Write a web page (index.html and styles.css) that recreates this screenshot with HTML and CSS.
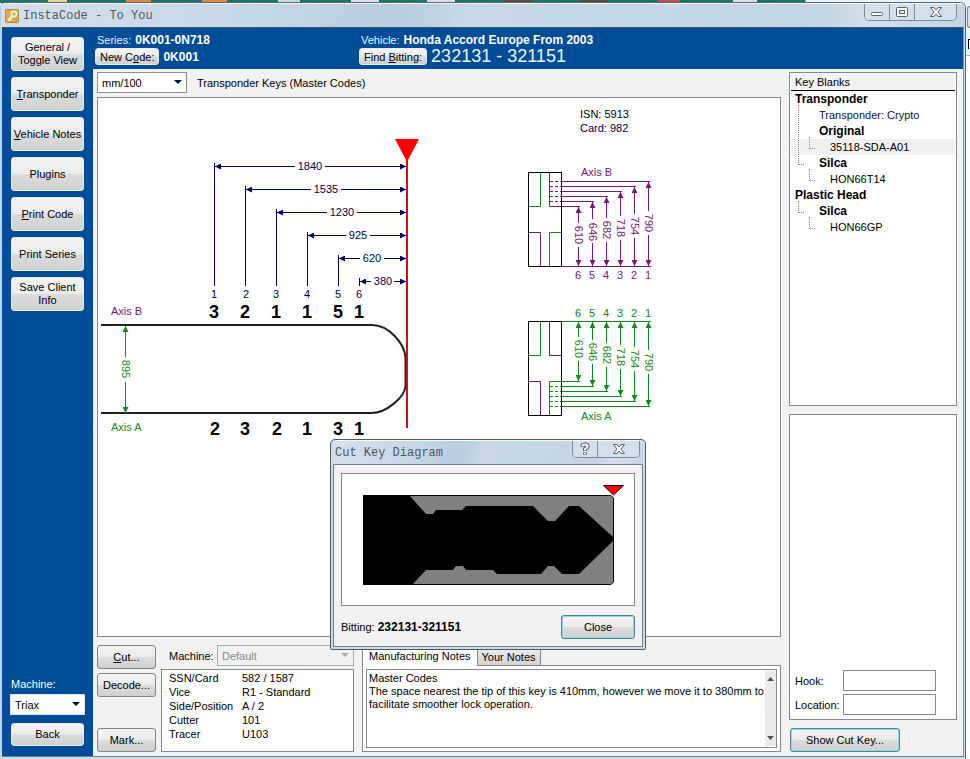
FILE: index.html
```html
<!DOCTYPE html>
<html lang="en">
<head>
<meta charset="utf-8">
<title>InstaCode - To You</title>
<link rel="stylesheet" href="styles.css">
</head>
<body>
<div class="desktop">
  <div class="window">
    <div class="titlebar">
      <svg class="app-icon" width="14" height="14" viewBox="0 0 14 14" aria-hidden="true">
        <rect x="0.5" y="0.5" width="13" height="13" rx="1" fill="#dfa840" stroke="#b98b3c"/>
        <path d="M3 11.500L8 6.500M4.500 10l1.500 1.500" stroke="#fff8e0" stroke-width="2" fill="none"/>
        <circle cx="9" cy="5" r="2.600" fill="#dfa840" stroke="#fff8e0" stroke-width="1.600"/>
      </svg>
      <span class="title">InstaCode - To You</span>
      <div class="caption-buttons">
        <button aria-label="Minimize"><svg width="14" height="12" viewBox="0 0 14 12"><rect x="1.500" y="6.500" width="11" height="3" rx="1" fill="#fff" stroke="#596270"/></svg></button>
        <button aria-label="Restore"><svg width="14" height="12" viewBox="0 0 14 12"><rect x="1.500" y="1.500" width="11" height="9" rx="1" fill="#fff" stroke="#596270"/><rect x="4.500" y="4.500" width="5" height="3" fill="#dde6ef" stroke="#596270"/></svg></button>
        <button class="wide" aria-label="Close window"><svg width="14" height="12" viewBox="0 0 14 12"><path d="M1.500 1.500h3.500l2 2.500 2-2.500h3.500L9 6l3.500 4.500H9L7 8l-2 2.500H1.500L5 6z" fill="#fff" stroke="#596270"/></svg></button>
      </div>
    </div>

    <div class="client">
      <nav class="sidebar">
        <button class="nav-button">General /<br>Toggle View</button>
        <button class="nav-button"><span><u>T</u>ransponder</span></button>
        <button class="nav-button"><span><u>V</u>ehicle Notes</span></button>
        <button class="nav-button">Plugins</button>
        <button class="nav-button"><span><u>P</u>rint Code</span></button>
        <button class="nav-button">Print Series</button>
        <button class="nav-button">Save Client<br>Info</button>
        <div class="sidebar-foot">
          <label for="machine-side">Machine:</label>
          <span class="select-wrap"><select id="machine-side"><option>Triax</option></select></span>
          <button class="nav-button back">Back</button>
        </div>
      </nav>

      <div class="page">
        <header class="banner">
          <div class="banner-series">
            <div class="banner-line">Series: <b>0K001-0N718</b></div>
            <div class="banner-line"><button class="small-button">New C<u>o</u>de:</button><b>0K001</b></div>
          </div>
          <div class="banner-vehicle">
            <div class="banner-line">Vehicle: <b>Honda Accord Europe From 2003</b></div>
            <div class="banner-line"><button class="small-button">Find <u>B</u>itting:</button><span class="bitting">232131 - 321151</span></div>
          </div>
        </header>

        <div class="content">
          <main class="work">
            <div class="toolbar">
              <span class="select-wrap unit"><select aria-label="Units"><option>mm/100</option></select></span>
              <span>Transponder Keys (Master Codes)</span>
            </div>

            <div class="canvas">
              <svg width="682" height="538" viewBox="98 98 682 538" role="img" aria-label="Key cutting specification">
                <defs>
                  <marker id="arrow-blue" viewBox="0 0 6 6" refX="6" refY="3" markerWidth="6" markerHeight="6" markerUnits="userSpaceOnUse" orient="auto-start-reverse"><path d="M0 0L6 3L0 6z" fill="#000060"/></marker>
                  <marker id="arrow-purple" viewBox="0 0 6 6" refX="6" refY="3" markerWidth="6" markerHeight="6" markerUnits="userSpaceOnUse" orient="auto-start-reverse"><path d="M0 0L6 3L0 6z" fill="#761a76"/></marker>
                  <marker id="arrow-green" viewBox="0 0 6 6" refX="6" refY="3" markerWidth="6" markerHeight="6" markerUnits="userSpaceOnUse" orient="auto-start-reverse"><path d="M0 0L6 3L0 6z" fill="#128a20"/></marker>
                </defs>

                <g class="text-blue"><text x="580" y="118" class="ink">ISN: 5913</text><text x="580" y="132">Card: 982</text></g>

                <path d="M101 325H372C389 325 405 344 405.500 358V386C405 397 386 413 372 413H101" fill="none" stroke="#222" stroke-width="2"/>
                <path d="M407 160V428" stroke="#d01010" stroke-width="2"/>
                <path d="M395 139H419L407 162z" fill="#f00"/>

                <g class="line-blue">
                  <path d="M214.500 163V286M245.500 186V286M276.500 209V286M307.500 232V286M338.500 255V286M359.500 278V286"/>
                  <g class="dims">
                    <path d="M215 166.500H406"/><path d="M246 189.500H406"/><path d="M277 212.500H406"/>
                    <path d="M308 235.500H406"/><path d="M339 258.500H406"/><path d="M360 281.500H406"/>
                  </g>
                </g>
                <g fill="#fff">
                  <rect x="295" y="160" width="30" height="12"/><rect x="311" y="183" width="30" height="12"/><rect x="327" y="206" width="30" height="12"/>
                  <rect x="346" y="229" width="24" height="12"/><rect x="360" y="252" width="24" height="12"/><rect x="371" y="275" width="23" height="12"/>
                </g>
                <g class="text-blue middle">
                  <text x="310" y="170">1840</text><text x="326" y="193">1535</text><text x="342" y="216">1230</text>
                  <text x="358" y="239">925</text><text x="372" y="262">620</text><text x="383" y="285">380</text>
                  <text x="214" y="298">1</text><text x="246" y="298">2</text><text x="276" y="298">3</text>
                  <text x="307" y="298">4</text><text x="338" y="298">5</text><text x="359" y="298">6</text>
                </g>
                <g class="cuts">
                  <text x="214" y="318">3</text><text x="245" y="318">2</text><text x="276" y="318">1</text><text x="307" y="318">1</text><text x="338" y="318">5</text><text x="359" y="318">1</text>
                  <text x="215" y="435">2</text><text x="245" y="435">3</text><text x="277" y="435">2</text><text x="307" y="435">1</text><text x="338" y="435">3</text><text x="359" y="435">1</text>
                </g>

                <text x="111" y="315" class="text-purple">Axis B</text>
                <text x="111" y="431" class="text-green">Axis A</text>
                <g class="line-green dims"><path d="M125.500 326V413"/></g>
                <rect x="120" y="357" width="12" height="25" fill="#fff"/>
                <g class="text-green middle"><text transform="translate(122 369) rotate(90)">895</text></g>

                <text x="581" y="176" class="text-purple">Axis B</text>
                <path class="line-green" d="M540.500 173V206.500H529M561 232.500H549.500V266"/>
                <path class="line-purple" d="M549.500 173V206.500H580M529 232.500H540.500V266M562 181.500H650M562 186.500H636M562 191.500H622M562 196.500H608M562 201.500H594M562 266.500H651"/>
                <path class="line-purple dashed" d="M550 181.500H561M550 186.500H561M550 191.500H561M550 196.500H561M550 201.500H561"/>
                <rect x="528.500" y="172.500" width="33" height="94" fill="none" stroke="#000"/>
                <g class="line-purple dims">
                  <path d="M578.500 207V266"/><path d="M592.500 202V266"/><path d="M606.500 197V266"/><path d="M620.500 192V266"/><path d="M634.500 187V266"/><path d="M648.500 182V266"/>
                </g>
                <g fill="#fff">
                  <rect x="573" y="223" width="12" height="24"/><rect x="587" y="219" width="12" height="24"/><rect x="601" y="218" width="12" height="24"/>
                  <rect x="615" y="216" width="12" height="24"/><rect x="629" y="214" width="12" height="24"/><rect x="643" y="211" width="12" height="24"/>
                </g>
                <g class="text-purple middle">
                  <text transform="translate(575 235) rotate(90)">610</text><text transform="translate(589 232) rotate(90)">646</text><text transform="translate(603 230) rotate(90)">682</text>
                  <text transform="translate(617 228) rotate(90)">718</text><text transform="translate(631 226) rotate(90)">754</text><text transform="translate(645 223) rotate(90)">790</text>
                  <text x="578" y="279">6</text><text x="592" y="279">5</text><text x="606" y="279">4</text><text x="620" y="279">3</text><text x="634" y="279">2</text><text x="648" y="279">1</text>
                </g>

                <text x="581" y="420" class="text-green">Axis A</text>
                <path class="line-purple" d="M549.500 322V355.500H561M529 381.500H540.500V415"/>
                <path class="line-green" d="M540.500 322V355.500H529M549.500 415V381.500H580M562 386.500H594M562 391.500H608M562 396.500H622M562 401.500H636M562 406.500H650M562 321.500H651"/>
                <path class="line-green dashed" d="M550 386.500H561M550 391.500H561M550 396.500H561M550 401.500H561M550 406.500H561"/>
                <rect x="528.500" y="321.500" width="33" height="94" fill="none" stroke="#000"/>
                <g class="line-green dims">
                  <path d="M578.500 322V381"/><path d="M592.500 322V386"/><path d="M606.500 322V391"/><path d="M620.500 322V396"/><path d="M634.500 322V401"/><path d="M648.500 322V406"/>
                </g>
                <g fill="#fff">
                  <rect x="573" y="337" width="12" height="24"/><rect x="587" y="340" width="12" height="24"/><rect x="601" y="343" width="12" height="24"/>
                  <rect x="615" y="345" width="12" height="24"/><rect x="629" y="347" width="12" height="24"/><rect x="643" y="350" width="12" height="24"/>
                </g>
                <g class="text-green middle">
                  <text transform="translate(575 349) rotate(90)">610</text><text transform="translate(589 352) rotate(90)">646</text><text transform="translate(603 355) rotate(90)">682</text>
                  <text transform="translate(617 357) rotate(90)">718</text><text transform="translate(631 359) rotate(90)">754</text><text transform="translate(645 362) rotate(90)">790</text>
                  <text x="578" y="317">6</text><text x="592" y="317">5</text><text x="606" y="317">4</text><text x="620" y="317">3</text><text x="634" y="317">2</text><text x="648" y="317">1</text>
                </g>
              </svg>
            </div>

            <div class="bottom">
              <div class="actions">
                <button class="button"><span><u>C</u>ut...</span></button>
                <button class="button">Decode...</button>
                <button class="button last">Mark...</button>
              </div>
              <div class="setup">
                <div class="setup-machine">
                  <label for="machine-cut">Machine:</label>
                  <span class="select-wrap disabled"><select id="machine-cut" disabled><option>Default</option></select></span>
                </div>
                <div class="setup-list">
                  <table>
                    <tr><th scope="row">SSN/Card</th><td>582 / 1587</td></tr>
                    <tr><th scope="row">Vice</th><td>R1 - Standard</td></tr>
                    <tr><th scope="row">Side/Position</th><td>A / 2</td></tr>
                    <tr><th scope="row">Cutter</th><td>101</td></tr>
                    <tr><th scope="row">Tracer</th><td>U103</td></tr>
                  </table>
                </div>
              </div>
              <div class="notes">
                <div class="tabs" role="tablist">
                  <button class="tab active" role="tab" aria-selected="true">Manufacturing Notes</button>
                  <button class="tab" role="tab" aria-selected="false">Your Notes</button>
                </div>
                <div class="notes-panel" role="tabpanel">
                  <div class="notes-box">
                    <textarea aria-label="Manufacturing Notes" readonly>Master Codes
The space nearest the tip of this key is 410mm, however we move it to 380mm to facilitate smoother lock operation.</textarea>
                    <div class="scrollbar" aria-hidden="true">
                      <svg width="7" height="4" viewBox="0 0 7 4"><path d="M0 4L3.500 0L7 4z" fill="#555"/></svg>
                      <svg width="7" height="4" viewBox="0 0 7 4"><path d="M0 0L3.500 4L7 0z" fill="#555"/></svg>
                    </div>
                  </div>
                </div>
              </div>
            </div>
          </main>

          <aside class="side">
            <section class="blanks">
              <h2>Key Blanks</h2>
              <ul class="tree">
                <li><b>Transponder</b>
                  <ul>
                    <li class="info">Transponder: Crypto</li>
                    <li><b>Original</b><ul><li class="leaf end selected">35118-SDA-A01</li></ul></li>
                    <li class="end far"><b>Silca</b><ul><li class="leaf end">HON66T14</li></ul></li>
                  </ul>
                </li>
                <li><b>Plastic Head</b>
                  <ul>
                    <li class="end"><b>Silca</b><ul><li class="leaf end">HON66GP</li></ul></li>
                  </ul>
                </li>
              </ul>
            </section>
            <section class="stock">
              <label for="hook">Hook:</label><input id="hook" type="text">
              <label for="location">Location:</label><input id="location" type="text">
            </section>
            <button class="button focus show-cut">Show Cut Key...</button>
          </aside>
        </div>
      </div>
    </div>

    <div class="dialog" role="dialog" aria-labelledby="dialog-title">
      <div class="titlebar">
        <span class="title" id="dialog-title">Cut Key Diagram</span>
        <div class="caption-buttons">
          <button aria-label="Help"><svg width="12" height="14" viewBox="0 0 12 14" fill="none"><path d="M3.500 5V4Q3.500 2.500 6 2.500T8.500 4.500Q8.500 6 6 7V9M6 10.500V12.500" stroke="#596270" stroke-width="4"/><path d="M3.500 4.500V4Q3.500 2.500 6 2.500T8.500 4.500Q8.500 6 6 7V8.500M6 11V12" stroke="#fff" stroke-width="2"/></svg></button>
          <button class="wide" aria-label="Close dialog"><svg width="14" height="12" viewBox="0 0 14 12"><path d="M1.500 1.500h3.500l2 2.500 2-2.500h3.500L9 6l3.500 4.500H9L7 8l-2 2.500H1.500L5 6z" fill="#fff" stroke="#596270"/></svg></button>
        </div>
      </div>
      <div class="dialog-body">
        <div class="cut-view">
          <svg width="292" height="131" viewBox="342 474 292 131" role="img" aria-label="Cut key profile">
            <path d="M363.500 495.500H611L613.500 498V582L611 584.500H363.500z" fill="#808080" stroke="#000"/>
            <path d="M363 495H409L426 514H433L436 510H462L466 506H533L548 521H555L569 506H579L613 537V541L579 574H562L554 566H548L541 574H497L493 570H466L463 566H456L453 570H426L412 585H363z"/>
            <path d="M603.500 485.500H623.500L613.500 495z" fill="#f00" stroke="#200"/>
          </svg>
        </div>
        <div class="dialog-foot">
          <span>Bitting: <b>232131-321151</b></span>
          <button class="button focus close">Close</button>
        </div>
      </div>
    </div>
  </div>
  <div class="behind"><div class="behind-tool"></div><div class="behind-line"></div></div>
</div>
</body>
</html>
```
FILE: styles.css
```css
* { box-sizing: border-box; }

body {
  margin: 0;
  font: 11px/14px "Liberation Sans", Arial, sans-serif;
  color: #000;
}

button, select, input, textarea { font: inherit; color: inherit; }
b { font-size: 12px; }

.desktop {
  display: grid;
  grid-template-columns: 1fr 4px;
  min-height: 100vh;
  padding-top: 2px;
  background:
    linear-gradient(90deg, transparent 48px, #e0d890 48px 67px, transparent 67px 126px, #e08a40 126px 151px, transparent 151px 202px, #e08a40 202px 227px, transparent 227px 278px, #c8dce0 278px 300px, transparent 300px 351px, #dde 351px 379px, transparent 379px 427px, #dde 427px 455px, transparent 455px 504px, #5a4a40 504px 532px, transparent 532px 580px, #5a4a40 580px 608px, transparent 608px 658px, #c05050 658px 680px, transparent 680px 733px, #dde 733px 757px, transparent 757px) 0 0 / 100% 3px no-repeat,
    linear-gradient(90deg, #1b7468 0 805px, #e8f0fa 806px) 0 0 / 100% 3px no-repeat #fff;
}

.window {
  position: relative;
  display: flex;
  flex-direction: column;
  border: 1px solid #58656f;
  border-left-color: #b9cfe2;
  border-bottom: 0;
  border-radius: 5px 6px 0 0;
  background: #cbdcea;
  padding-bottom: 2px;
}

.titlebar {
  display: flex;
  align-items: center;
  height: 24px;
  padding: 0 8px 0 4px;
  border-top: 1px solid #f4f9fd;
  border-radius: 5px 5px 0 0;
  background: linear-gradient(100deg, #d3e0eb 0%, #c5d6e6 28%, #b8cddf 40%, #bdd0e1 44%, #c8d8e6 48%, #c3d4e4 85%, #d3dfe9 90%, #c4d5e5 100%);
}

.title {
  flex: 1;
  margin-left: 4px;
  font: 12px/16px "Liberation Mono", monospace;
  color: #50585f;
}

.caption-buttons {
  display: flex;
  align-self: flex-start;
  border: 1px solid #7f8b99;
  border-top: 0;
  border-radius: 0 0 5px 5px;
  overflow: hidden;
}

.caption-buttons button {
  display: flex;
  align-items: center;
  justify-content: center;
  width: 25px;
  height: 16px;
  padding: 0;
  border: 0;
  border-right: 1px solid #7f8b99;
  background: #d3dfea;
}

.caption-buttons .wide { width: 41px; border-right: 0; }

.client {
  flex: 1;
  display: flex;
  margin: 0 1px;
  border-top: 1px solid #40566e;
  border-bottom: 1px solid #6f8090;
  border-right: 1px solid #8094a6;
}

.sidebar {
  display: flex;
  flex-direction: column;
  gap: 6px;
  width: 91px;
  padding: 9px 9px 10px;
  background: #004c96;
}

.nav-button, .small-button, .button {
  padding: 0;
  border: 1px solid #e8eef4;
  border-radius: 3px;
  background: linear-gradient(#f3f3f3 0%, #ececec 48%, #dcdcdc 52%, #d0d0d0 100%);
}

.nav-button {
  height: 34px;
  line-height: 13px;
  white-space: nowrap;
}

.sidebar-foot {
  display: flex;
  flex-direction: column;
  margin-top: auto;
  color: #fff;
}

.sidebar-foot .select-wrap { margin: 3px -1px 8px; }
.back { height: 23px; color: #000; }

.select-wrap {
  position: relative;
  display: block;
  color: #000;
}

.select-wrap select {
  appearance: none;
  display: block;
  width: 100%;
  height: 21px;
  padding: 0 4px;
  border: 1px solid #8a8f94;
  border-radius: 0;
  background: #fff;
  color: #000;
}

.select-wrap::after {
  content: "";
  position: absolute;
  right: 5px;
  top: 8px;
  border: 4px solid transparent;
  border-top-color: #001040;
  border-bottom: 0;
  pointer-events: none;
}

.select-wrap.disabled select { color: #888; border-color: #aaa; background: #f2f2f2; opacity: 1; }
.select-wrap.disabled::after { border-top-color: #aaa; }
.sidebar .select-wrap select { border-color: #dce6f0; }

.page {
  flex: 1;
  min-width: 0;
  display: flex;
  flex-direction: column;
  background: #f2f2f2;
}

.banner {
  display: flex;
  height: 41px;
  padding: 3px 2px 5px;
  background: #004c96;
  color: #e6f6ff;
}

.banner-series { width: 264px; }
.banner-line { display: flex; align-items: center; gap: 4px; height: 17px; }
.banner-line:first-child { padding-left: 2px; }
.small-button { height: 17px; padding: 0 4px; color: #000; }
.banner-vehicle { white-space: nowrap; }
.banner b { color: #fff; }
.bitting { font-size: 18px; line-height: 17px; }

.content {
  flex: 1;
  display: grid;
  grid-template-columns: 1fr 168px;
  gap: 8px;
  padding: 3px 6px 4px 3px;
  border-left: 1px solid #e4f0f8;
}

.work { display: flex; flex-direction: column; min-width: 0; }

.toolbar {
  display: flex;
  align-items: center;
  gap: 10px;
  padding-bottom: 4px;
}

.unit { width: 90px; }

.canvas {
  flex: 1 1 0;
  min-height: 0;
  overflow: hidden;
  border: 1px solid #888;
  background: #fff;
}

.canvas svg, .cut-view svg { display: block; }

.text-blue { fill: #000050; }
.ink { fill: #000; }
.text-purple { fill: #761a76; }
.text-green { fill: #128a20; }
.middle { text-anchor: middle; }
.cuts { font-size: 18px; font-weight: bold; text-anchor: middle; }
.line-blue, .line-purple, .line-green { fill: none; stroke-width: 1; }
.line-blue { stroke: #000060; }
.line-purple { stroke: #761a76; }
.line-green { stroke: #128a20; }
.dashed { stroke-dasharray: 3 2; }
.line-blue .dims path { marker-start: url(#arrow-blue); marker-end: url(#arrow-blue); }
.line-purple.dims path { marker-start: url(#arrow-purple); marker-end: url(#arrow-purple); }
.line-green.dims path { marker-start: url(#arrow-green); marker-end: url(#arrow-green); }

.bottom {
  display: grid;
  grid-template-columns: 59px 193px 1fr;
  column-gap: 5px;
  padding-top: 8px;
}

.actions { display: flex; flex-direction: column; gap: 4px; }
.button { height: 24px; border-color: #858585; }
.actions .last { margin-top: auto; }

.button.focus {
  border-color: #4b8594;
  box-shadow: inset 0 0 0 1px #8fd8ea;
}

.setup { display: flex; flex-direction: column; gap: 3px; }
.setup-machine { display: flex; align-items: center; justify-content: space-between; padding-left: 8px; }
.setup-machine .select-wrap { width: 137px; }

.setup-list {
  flex: 1;
  padding: 1px 7px;
  border: 1px solid #888;
  background: #fff;
}

.setup-list table { border-collapse: collapse; }
.setup-list th { width: 73px; padding: 0; font-weight: normal; text-align: left; }
.setup-list td { padding: 0; }

.notes { display: flex; flex-direction: column; min-width: 0; padding-left: 3px; }
.tabs { display: flex; align-items: flex-end; height: 20px; }

.tab {
  height: 17px;
  padding: 0 4px;
  border: 1px solid #888;
  border-bottom: 0;
  background: linear-gradient(#ececec, #d2d2d2);
}

.tab.active {
  position: relative;
  height: 21px;
  margin-bottom: -1px;
  padding: 0 6px;
  border-right: 0;
  background: #fff;
}

.notes-panel {
  flex: 1;
  display: flex;
  padding: 3px;
  border: 1px solid #888;
  background: #fff;
}

.notes-box { flex: 1; display: flex; padding: 1px 0 1px 1px; border: 1px solid #888; }

.notes-box textarea {
  flex: 1;
  min-width: 0;
  height: 75px;
  padding: 1px 0 1px 1px;
  border: 0;
  line-height: 13px;
  resize: none;
  overflow: hidden;
  background: #fff;
}

.scrollbar {
  display: flex;
  flex-direction: column;
  align-items: center;
  justify-content: space-between;
  width: 11px;
  padding: 6px 0;
  background: #eaeaea;
}

.side { display: flex; flex-direction: column; gap: 8px; }

.blanks {
  height: 334px;
  padding: 0 1px;
  border: 1px solid #888;
  background: #fff;
}

.blanks h2 {
  margin: 0;
  padding: 2px 4px 0;
  height: 18px;
  border-bottom: 1px solid #000;
  background: #f2f2f2;
  font: inherit;
}

.tree, .tree ul { margin: 0; padding: 0; list-style: none; line-height: 16px; }
.tree b { vertical-align: top; }
.tree > li { padding-left: 4px; }
.tree ul { margin-left: -4px; }
.tree ul > li { position: relative; padding-left: 28px; }
.tree ul ul { margin-left: -28px; }
.tree ul .leaf { padding-left: 39px; }
.tree .info { color: #101040; }
.tree .selected { background: #f0f0f0; }

.tree .end::before {
  content: "";
  position: absolute;
  left: 7px;
  top: -2px;
  width: 5px;
  height: 11px;
  border: 1px dotted #888;
  border-width: 0 0 1px 1px;
}

.tree .far::before { top: -50px; height: 59px; }
.tree .leaf::before { left: 18px; }

.stock {
  flex: 1;
  display: grid;
  grid-template-columns: 45px 93px;
  gap: 3px;
  align-content: end;
  align-items: center;
  padding: 4px 5px;
  border: 1px solid #888;
  background: #fff;
}

.stock input {
  width: 100%;
  height: 21px;
  padding: 0 3px;
  border: 1px solid #888;
  background: #fff;
}

.show-cut { align-self: flex-start; width: 110px; margin-left: 1px; }

.dialog {
  position: absolute;
  left: 329px;
  top: 436px;
  width: 316px;
  padding: 0 2px 2px;
  border: 1px solid #4d5a66;
  border-radius: 5px 5px 2px 2px;
  background: #cbdcea;
}

.dialog .titlebar { height: 24px; padding: 0 3px 0 0; }
.dialog .title { margin-left: 2px; }

.dialog-body {
  padding: 8px 7px 7px;
  border: 1px solid #6f8090;
  background: #f2f2f2;
}

.cut-view { border: 1px solid #888; background: #fff; overflow: hidden; }

.dialog-foot {
  display: flex;
  align-items: center;
  justify-content: space-between;
  padding-top: 9px;
}

.close { width: 74px; }

.behind { background: linear-gradient(#e8f0fa 0 53px, #aab 53px 54px, #fff 54px); padding-top: 4px; }
.behind-tool { height: 22px; margin-left: 1px; border: 1px solid #888; border-right: 0; border-radius: 4px 0 0 4px; background: #ddd; }
.behind-line { height: 10px; margin: 11px 0 0 2px; border: 1px solid #000; border-width: 1px 0 0 1px; }
```
